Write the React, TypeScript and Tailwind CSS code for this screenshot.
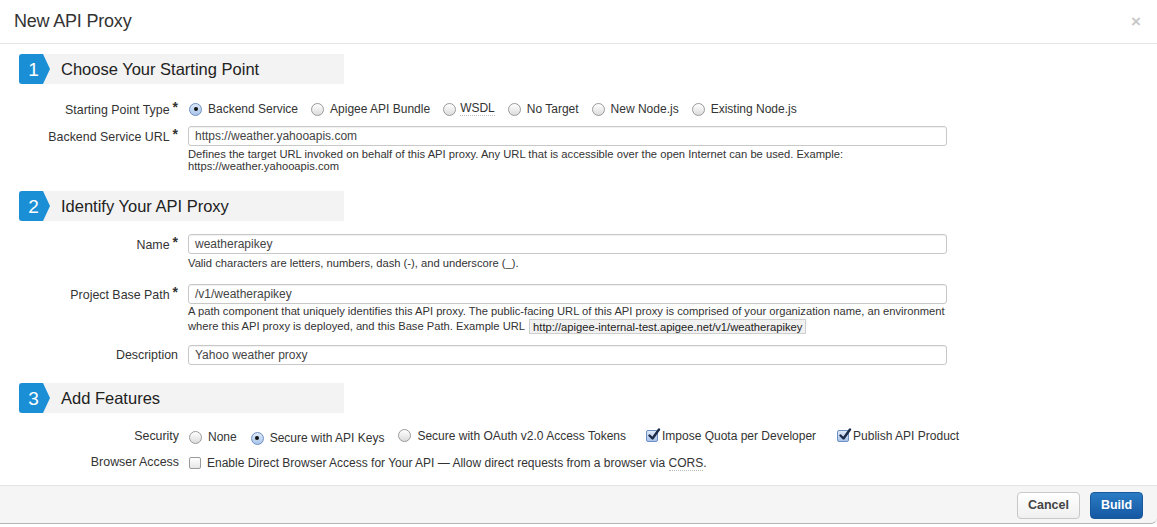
import React from "react";

const Radio = ({ checked }: { checked?: boolean }) => (
  <span
    className={
      "inline-flex items-center justify-center w-[13px] h-[13px] rounded-full border shrink-0 " +
      (checked
        ? "border-[#6d8fc2] bg-gradient-to-b from-[#dfeaf9] to-[#a9c4ea]"
        : "border-[#9a9a9a] bg-gradient-to-b from-[#ffffff] to-[#dcdcdc]")
    }
  >
    {checked && <span className="w-[4px] h-[4px] rounded-full bg-[#111]" />}
  </span>
);

const Check = ({ checked }: { checked?: boolean }) => (
  <span
    className={
      "relative inline-flex w-[12px] h-[12px] rounded-[2px] border shrink-0 " +
      (checked
        ? "border-[#6d8fc2] bg-gradient-to-b from-[#dfeaf9] to-[#a9c4ea]"
        : "border-[#9a9a9a] bg-gradient-to-b from-[#ffffff] to-[#e6e6e6]")
    }
  >
    {checked && (
      <svg className="absolute left-[0px] top-[-3px]" width="14" height="14" viewBox="0 0 14 14">
        <path d="M2.5 7.5 L5.5 10.5 L12 1.5" fill="none" stroke="#1c2b48" strokeWidth="2.4" strokeLinecap="round" strokeLinejoin="round" />
      </svg>
    )}
  </span>
);

const Opt = ({ children, checked, type = "radio", gapClass = "ml-[6px]", dotted }: any) => (
  <span className="inline-flex items-center">
    {type === "radio" ? <Radio checked={checked} /> : <Check checked={checked} />}
    <span className={gapClass + (dotted ? " border-b border-dotted border-[#bbb] leading-[13px]" : "")}>{children}</span>
  </span>
);

const SectionBar = ({ n, title }: { n: string; title: string }) => (
  <div className="ml-[19px] w-[325px] h-[30px] bg-[#f3f3f3] flex items-center">
    <div className="relative h-[30px] w-[24px] bg-[#1b8fd5] rounded-l-[3px] flex items-center justify-center text-white text-[19px] leading-none pl-[5px]">
      {n}
      <span className="absolute right-[-7px] top-0 w-0 h-0 border-t-[15px] border-b-[15px] border-l-[7px] border-t-transparent border-b-transparent border-l-[#1b8fd5]" />
    </div>
    <div className="ml-[18px] text-[16.5px] text-[#222]">{title}</div>
  </div>
);

const Label = ({ children, req }: { children: React.ReactNode; req?: boolean }) => (
  <div className="w-[180px] shrink-0 text-right text-[12.4px] text-[#333] pr-[2px]">
    {children}
    {req && <span className="ml-[3px] text-[14px] font-bold relative top-[-2px]">*</span>}
  </div>
);

const Input = ({ value }: { value: string }) => (
  <div className="w-[759px] h-[20px] border border-[#c8c8c8] rounded-[3px] bg-white px-[6px] flex items-center text-[12px] text-[#444] shadow-[inset_0_1px_1px_rgba(0,0,0,0.06)]">
    {value}
  </div>
);

export default function App() {
  return (
    <div className="w-[1157px] h-[527px] bg-white relative overflow-hidden" style={{ fontFamily: '"Liberation Sans", Arial, sans-serif' }}>
      <div className="h-[44px] border-b border-[#e5e5e5] flex items-center justify-between pl-[14px] pr-[16px]">
        <div className="text-[18px] text-[#333] tracking-[-0.2px]">New API Proxy</div>
        <div className="text-[#c8c8c8] text-[17px] font-bold leading-none">×</div>
      </div>

      <div className="mt-[10px]">
        <SectionBar n="1" title="Choose Your Starting Point" />
        <div className="mt-[15px] h-[20px] flex items-center">
          <Label req>Starting Point Type</Label>
          <div className="ml-[9px] flex items-center gap-[13px] text-[12px] text-[#333]">
            <Opt checked>Backend Service</Opt>
            <Opt>Apigee API Bundle</Opt>
            <Opt dotted gapClass="ml-[4px]">WSDL</Opt>
            <Opt>No Target</Opt>
            <Opt>New Node.js</Opt>
            <Opt>Existing Node.js</Opt>
          </div>
        </div>
        <div className="mt-[7px] flex">
          <div className="h-[20px] flex items-center"><Label req>Backend Service URL</Label></div>
          <div className="ml-[8px]">
            <Input value="https://weather.yahooapis.com" />
            <div className="mt-[2px] text-[11.2px] leading-[12px] text-[#333] w-[760px]">
              Defines the target URL invoked on behalf of this API proxy. Any URL that is accessible over the open Internet can be used. Example:<br />
              https://weather.yahooapis.com
            </div>
          </div>
        </div>
      </div>

      <div className="mt-[19px]">
        <SectionBar n="2" title="Identify Your API Proxy" />
        <div className="mt-[13px] flex">
          <div className="h-[20px] flex items-center"><Label req>Name</Label></div>
          <div className="ml-[8px]">
            <Input value="weatherapikey" />
            <div className="mt-[3px] text-[11.2px] leading-[12px] text-[#333]">
              Valid characters are letters, numbers, dash (-), and underscore (_).
            </div>
          </div>
        </div>
        <div className="mt-[15px] flex">
          <div className="h-[20px] flex items-center"><Label req>Project Base Path</Label></div>
          <div className="ml-[8px]">
            <Input value="/v1/weatherapikey" />
            <div className="mt-[1px] text-[11.2px] leading-[13px] text-[#333]">
              A path component that uniquely identifies this API proxy. The public-facing URL of this API proxy is comprised of your organization name, an environment
            </div>
            <div className="text-[11.2px] leading-[16px] text-[#333] flex items-center">
              where this API proxy is deployed, and this Base Path. Example URL
              <span className="ml-[4px] px-[3px] h-[15px] leading-[14px] bg-[#f1f1f1] border border-[#cfcfcf] text-[#222]">http://apigee-internal-test.apigee.net/v1/weatherapikey</span>
            </div>
          </div>
        </div>
        <div className="mt-[11px] flex">
          <div className="h-[20px] flex items-center"><Label>Description</Label></div>
          <div className="ml-[8px]">
            <Input value="Yahoo weather proxy" />
          </div>
        </div>
      </div>

      <div className="mt-[18px]">
        <SectionBar n="3" title="Add Features" />
        <div className="mt-[15px] h-[18px] flex items-center">
          <div className="w-[180px] shrink-0 text-right text-[12.4px] text-[#333] pr-[1px] relative top-[-1px]">Security</div>
          <div className="ml-[9px] flex items-center text-[12px] text-[#333]">
            <Opt>None</Opt>
            <span className="ml-[14px]"><Opt checked>Secure with API Keys</Opt></span>
            <span className="ml-[14px]"><Opt>Secure with OAuth v2.0 Access Tokens</Opt></span>
            <span className="ml-[20px]"><Opt type="check" gapClass="ml-[4px]" checked>Impose Quota per Developer</Opt></span>
            <span className="ml-[21px]"><Opt type="check" gapClass="ml-[4px]" checked>Publish API Product</Opt></span>
          </div>
        </div>
        <div className="mt-[8px] h-[18px] flex items-center">
          <div className="w-[180px] shrink-0 text-right text-[12.4px] text-[#333] pr-[1px] relative top-[-1px]">Browser Access</div>
          <div className="ml-[9px] flex items-center text-[12px] text-[#333]">
            <Opt type="check" gapClass="ml-[6px]">
              Enable Direct Browser Access for Your API — Allow direct requests from a browser via{" "}
              <span className="border-b border-dotted border-[#bbb]">CORS</span>.
            </Opt>
          </div>
        </div>
      </div>

      <div className="absolute left-0 right-0 top-[485px] h-[39px] bg-[#f5f5f5] border-t border-[#e3e3e3] border-b border-b-[#b5b5b5] rounded-br-[6px] flex items-start pt-[6px] justify-end pr-[14px] gap-[10px]">
        <button className="w-[63px] h-[27px] rounded-[4px] border border-[#c8c8c8] bg-gradient-to-b from-[#ffffff] to-[#f0f0f0] text-[12.5px] font-bold text-[#444]">
          Cancel
        </button>
        <button className="w-[53px] h-[27px] rounded-[4px] border border-[#1a5a9c] bg-gradient-to-b from-[#2b7cc4] to-[#1557a2] text-[12.5px] font-bold text-white">
          Build
        </button>
      </div>
    </div>
  );
}
